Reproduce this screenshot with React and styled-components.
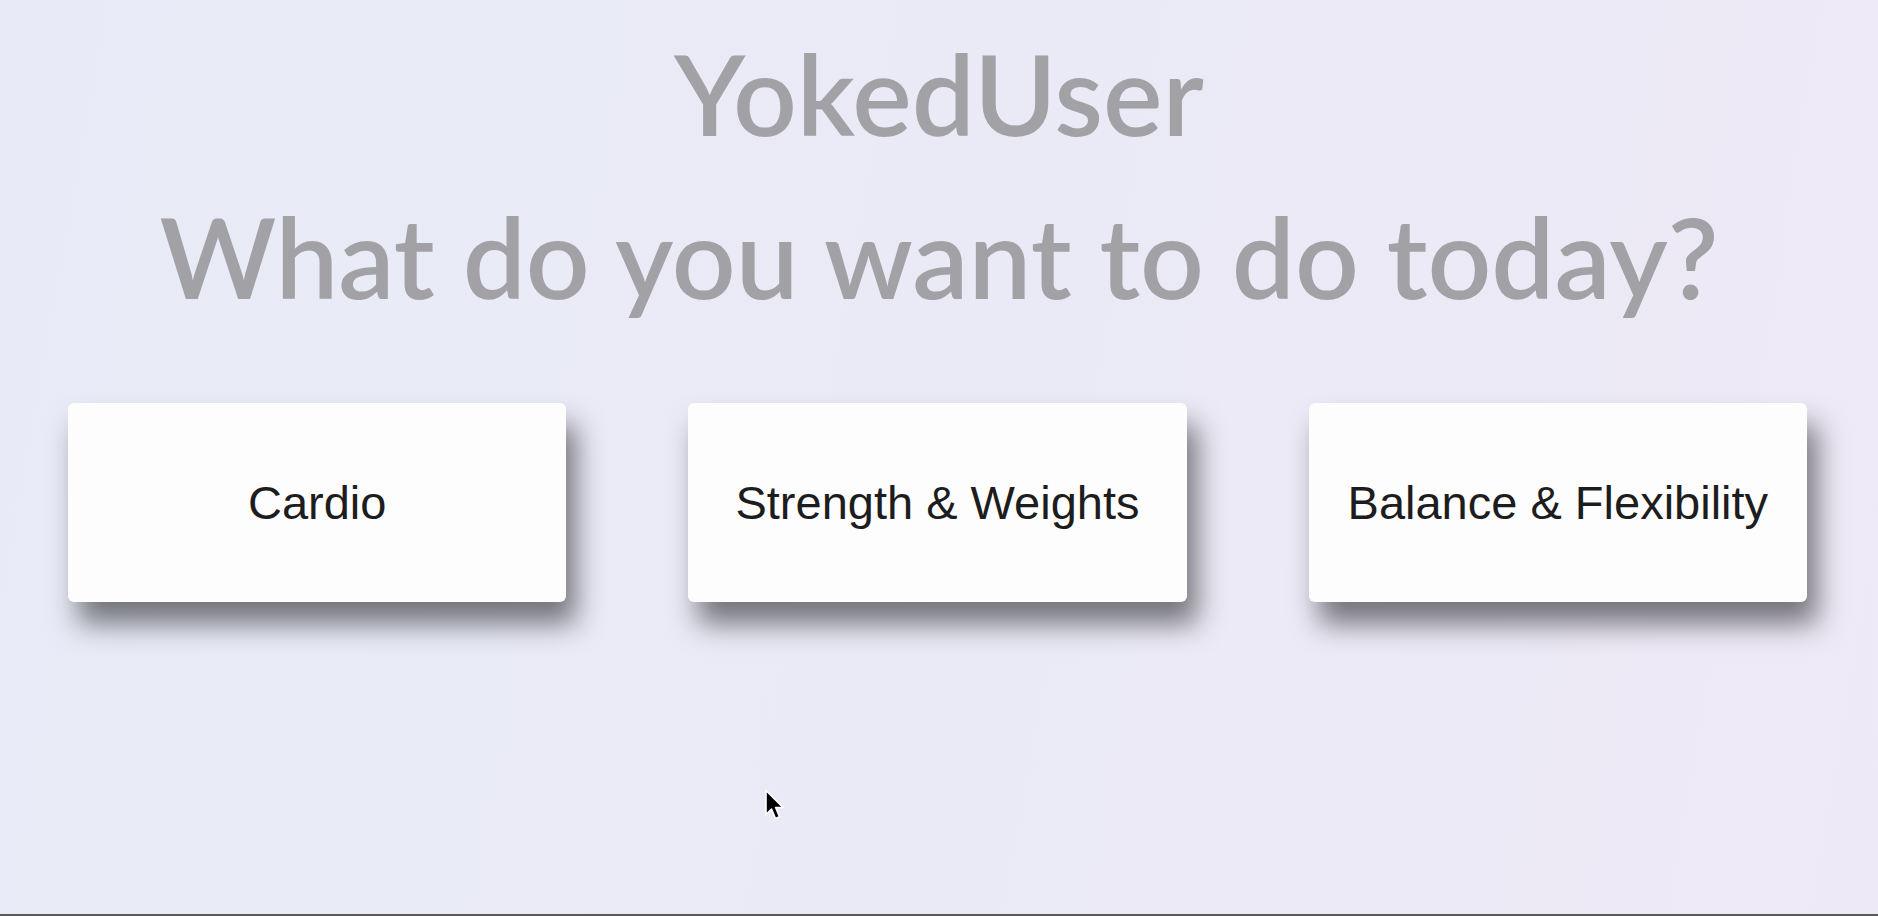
import styled, { createGlobalStyle } from "styled-components";

const GlobalStyle = createGlobalStyle`
  html, body {
    margin: 0;
    padding: 0;
  }
  * {
    box-sizing: border-box;
  }
`;

const Page = styled.div`
  position: relative;
  width: 100%;
  height: 916px;
  display: flex;
  flex-direction: column;
  align-items: center;
  background: linear-gradient(100deg, #e8ebf7 0%, #eaeaf6 55%, #eee9f6 100%);
  border-bottom: 2px solid #5a5a5e;
  overflow: hidden;
`;

const Title = styled.h1`
  margin: 26px 0 0;
  font-family: "Lato", "Open Sans", sans-serif;
  font-weight: 600;
  font-size: 112px;
  line-height: 1.2;
  color: #a2a2a6;
`;

const Question = styled.h2`
  margin: 29px 0 0;
  font-family: "Lato", "Open Sans", sans-serif;
  font-weight: 600;
  font-size: 112px;
  line-height: 1.2;
  color: #a2a2a6;
`;

const CardRow = styled.div`
  width: 100%;
  margin-top: 79px;
  padding: 0 71px 0 68px;
  display: grid;
  grid-template-columns: repeat(3, 1fr);
  column-gap: 122px;
`;

const Card = styled.button`
  height: 199px;
  display: flex;
  align-items: center;
  justify-content: center;
  border: none;
  border-radius: 6px;
  background: #fdfdfd;
  box-shadow: 10px 22px 28px rgba(0, 0, 0, 0.5);
  font-family: "Liberation Sans", Arial, sans-serif;
  font-size: 47px;
  color: #1d1d20;
  cursor: pointer;
`;

const Cursor = styled.svg`
  position: absolute;
  left: 764px;
  top: 789px;
  width: 22px;
  height: 33px;
`;

const options = ["Cardio", "Strength & Weights", "Balance & Flexibility"];

const App = () => {
  return (
    <>
      <GlobalStyle />
      <Page>
        <Title>YokedUser</Title>
        <Question>What do you want to do today?</Question>
        <CardRow>
          {options.map((label) => (
            <Card key={label}>{label}</Card>
          ))}
        </CardRow>
        <Cursor viewBox="0 0 22 32">
          <path
            d="M2 1 L2 25 L7.5 19.5 L11.5 29 L15.5 27.3 L11.6 18 L19 18 Z"
            fill="#000"
            stroke="#fff"
            strokeWidth="1.6"
            strokeLinejoin="round"
          />
        </Cursor>
      </Page>
    </>
  );
};

export default App;
